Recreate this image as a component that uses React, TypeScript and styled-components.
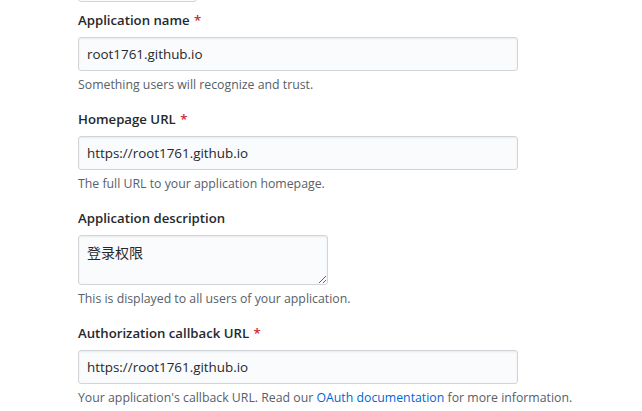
import styled, { createGlobalStyle } from 'styled-components';

const GlobalStyle = createGlobalStyle`
  html, body {
    margin: 0;
    padding: 0;
    background: #fff;
  }
  body {
    font-family: "Open Sans", "Noto Sans CJK SC", sans-serif;
    font-size: 14px;
    line-height: 1.5;
    color: #24292e;
    overflow: hidden;
  }
`;

const Page = styled.div`
  width: 642px;
  height: 411px;
  padding-left: 78px;
  box-sizing: border-box;
  overflow: hidden;
`;

const PrevField = styled.div`
  width: 119px;
  height: 30px;
  margin-top: -28px;
  border: 1px solid #d1d5da;
  border-radius: 3px;
  background: #fafbfc;
  box-sizing: border-box;
`;

const FormGroup = styled.dl`
  margin: 15px 0;
  &:first-of-type {
    margin-top: 8px;
  }
`;

const Label = styled.dt`
  margin: 0 0 6px;
  font-size: 13.2px;
  font-weight: 600;
  line-height: 21px;
`;

const Required = styled.span`
  color: #cb2431;
  margin-left: 1px;
`;

const Field = styled.dd`
  display: flow-root;
  margin: 0;
`;

const Input = styled.input<{ $width?: number }>`
  display: block;
  box-sizing: border-box;
  width: ${({ $width }) => $width ?? 440}px;
  height: 34px;
  padding: 6px 8px;
  font-family: inherit;
  font-size: 13.4px;
  line-height: 20px;
  color: #24292e;
  background: #fafbfc;
  border: 1px solid #d1d5da;
  border-radius: 3px;
  box-shadow: inset 0 1px 2px rgba(27, 31, 35, 0.075);
  outline: none;
`;

const TextArea = styled.textarea`
  display: block;
  box-sizing: border-box;
  width: 250px;
  height: 50px;
  padding: 6px 8px;
  font-family: "Noto Sans CJK SC", sans-serif;
  font-size: 14px;
  line-height: 20px;
  color: #24292e;
  background: #fafbfc;
  border: 1px solid #d1d5da;
  border-radius: 3px;
  box-shadow: inset 0 1px 2px rgba(27, 31, 35, 0.075);
  outline: none;
  resize: vertical;
`;

const Note = styled.p`
  margin: 5px 0 1px;
  min-height: 17px;
  font-size: 12.3px;
  line-height: 17px;
  color: #586069;
`;

const Link = styled.a`
  color: #0366d6;
  text-decoration: none;
`;

export default function App() {
  return (
    <>
      <GlobalStyle />
      <Page>
        <PrevField />
        <FormGroup>
          <Label>
            Application name <Required>*</Required>
          </Label>
          <Field>
            <Input defaultValue="root1761.github.io" />
            <Note>Something users will recognize and trust.</Note>
          </Field>
        </FormGroup>
        <FormGroup>
          <Label>
            Homepage URL <Required>*</Required>
          </Label>
          <Field>
            <Input defaultValue="https://root1761.github.io" />
            <Note>The full URL to your application homepage.</Note>
          </Field>
        </FormGroup>
        <FormGroup>
          <Label>Application description</Label>
          <Field>
            <TextArea defaultValue="登录权限" />
            <Note>This is displayed to all users of your application.</Note>
          </Field>
        </FormGroup>
        <FormGroup>
          <Label>
            Authorization callback URL <Required>*</Required>
          </Label>
          <Field>
            <Input defaultValue="https://root1761.github.io" />
            <Note>
              Your application's callback URL. Read our{' '}
              <Link href="#">OAuth documentation</Link> for more information.
            </Note>
          </Field>
        </FormGroup>
      </Page>
    </>
  );
}
